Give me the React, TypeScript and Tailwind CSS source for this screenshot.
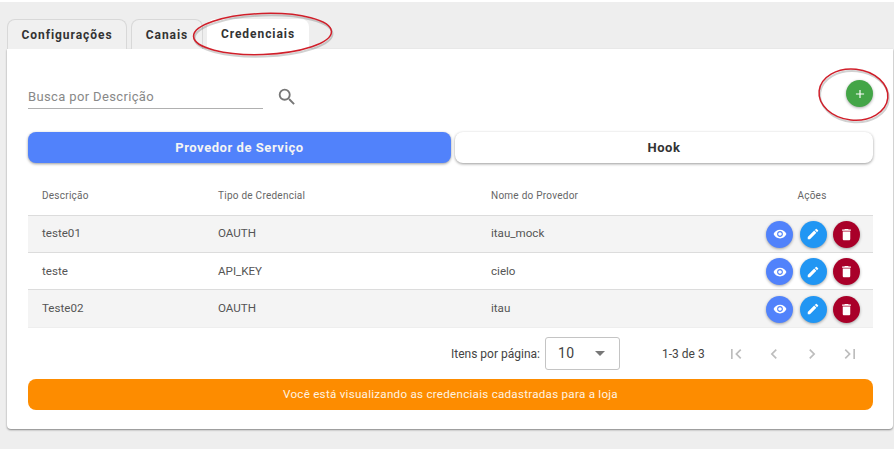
import React from "react";
import {
  MdAdd,
  MdChevronLeft,
  MdChevronRight,
  MdDelete,
  MdEdit,
  MdFirstPage,
  MdLastPage,
  MdSearch,
  MdVisibility,
} from "react-icons/md";

const rows = [
  { descricao: "teste01", tipo: "OAUTH", provedor: "itau_mock" },
  { descricao: "teste", tipo: "API_KEY", provedor: "cielo" },
  { descricao: "Teste02", tipo: "OAUTH", provedor: "itau" },
];

const RoundButton = ({ color, children }: { color: string; children: React.ReactNode }) => (
  <button className={`flex h-[27px] w-[27px] items-center justify-center rounded-full text-white shadow-[0_1px_3px_rgba(0,0,0,0.35)] ${color}`}>
    {children}
  </button>
);

const Tab = ({ label, width, active }: { label: string; width: string; active?: boolean }) => (
  <div
    className={`flex h-[30px] items-center justify-center rounded-t-lg text-[12px] font-bold tracking-[0.95px] text-[#333] ${width} ${
      active ? "bg-white" : "border border-b-0 border-[#d8d8d8] bg-[#f0f0f0]"
    }`}
  >
    {label}
  </div>
);

const App = () => {
  return (
    <div className="relative h-[456px] w-[894px] overflow-hidden bg-white pt-[2px] font-['Roboto',sans-serif]">
      <div className="h-[447px] bg-[#eeeeee] pl-[7px] pr-[1px] pt-[17px]">
        <div className="flex gap-[4px]">
          <Tab label="Configurações" width="w-[120px]" />
          <Tab label="Canais" width="w-[72px]" />
          <Tab label="Credenciais" width="w-[102px]" active />
        </div>
        <div className="h-[380px] rounded-b-sm bg-white pl-[21px] pr-[20px] shadow-[0_1px_2px_rgba(0,0,0,0.45)]">
          <div className="flex h-[83px] items-start justify-between pt-[31px]">
            <div className="mt-[4px] flex items-center">
              <div className="flex h-[25px] w-[235px] items-center whitespace-nowrap border-b border-[#b0b0b0] pt-[2px] text-[13px] tracking-[0.36px] text-[#888]">
                Busca por Descrição
              </div>
              <MdSearch size={22} className="ml-[13px] text-[#777]" />
            </div>
            <button className="flex h-[27px] w-[27px] items-center justify-center rounded-full bg-[#43a547] text-white shadow-[0_1px_3px_rgba(0,0,0,0.35)]">
              <MdAdd size={14} />
            </button>
          </div>

          <div className="flex gap-[4px]">
            <div className="flex h-[31px] w-[423px] items-center justify-center rounded-lg bg-[#5182fb] text-[13px] font-bold tracking-[0.55px] text-[#f4f4f4] shadow-[0_1px_3px_rgba(0,0,0,0.4)]">
              Provedor de Serviço
            </div>
            <div className="flex h-[31px] flex-1 items-center justify-center rounded-lg bg-white text-[13px] font-bold tracking-[0.6px] text-[#333] shadow-[0_1px_3px_rgba(0,0,0,0.4)]">
              Hook
            </div>
          </div>

          <div className="mt-[9px] grid h-[43px] grid-cols-[176px_273px_1fr_100px] items-center pl-[14px] pt-[4px] text-[10px] tracking-[0.25px] text-[#666]">
            <span>Descrição</span>
            <span>Tipo de Credencial</span>
            <span>Nome do Provedor</span>
            <span className="pr-[22px] text-center">Ações</span>
          </div>

          {rows.map((row, i) => (
            <div
              key={row.descricao}
              className={`grid grid-cols-[176px_273px_1fr_auto] items-center border-t border-[#dcdcdc] pl-[14px] text-[11.6px] text-[#555] ${
                i % 2 === 0 ? "bg-[#f4f4f4]" : "bg-white"
              } ${i === 2 ? "h-[38px]" : "h-[37px]"} ${i > 0 ? "pt-[1px]" : ""}`}
            >
              <span>{row.descricao}</span>
              <span>{row.tipo}</span>
              <span>{row.provedor}</span>
              <div className="flex gap-[6.5px] pr-[13px]">
                <RoundButton color="bg-[#5182fb]">
                  <MdVisibility size={14} />
                </RoundButton>
                <RoundButton color="bg-[#2196f3]">
                  <MdEdit size={14} />
                </RoundButton>
                <RoundButton color="bg-[#a90029]">
                  <MdDelete size={15} />
                </RoundButton>
              </div>
            </div>
          ))}

          <div className="flex h-[52px] items-center border-t border-[#eeeeee] pl-[423px] text-[12px] text-[#444]">
            <span className="w-[94px] whitespace-nowrap">Itens por página:</span>
            <div className="flex h-[33px] w-[75px] items-center justify-between rounded-[3px] border border-[#c4c4c4] pl-[12px] pr-[14px] text-[14px] tracking-[0.3px]">
              10
              <span className="h-0 w-0 border-x-[5px] border-t-[5px] border-x-transparent border-t-[#777]" />
            </div>
            <span className="ml-[42px] w-[42px] whitespace-nowrap">1-3 de 3</span>
            <div className="ml-[13px] flex text-[#bdbdbd]">
              <span className="flex w-[38px] justify-center">
                <MdFirstPage size={20} />
              </span>
              <span className="flex w-[38px] justify-center">
                <MdChevronLeft size={20} />
              </span>
              <span className="flex w-[38px] justify-center">
                <MdChevronRight size={20} />
              </span>
              <span className="flex w-[38px] justify-center">
                <MdLastPage size={20} />
              </span>
            </div>
          </div>

          <div className="flex h-[31px] items-center justify-center rounded-lg bg-[#fd8c00] text-[11.6px] tracking-[0.27px] text-[#fff3e0]">
            Você está visualizando as credenciais cadastradas para a loja
          </div>
        </div>
      </div>

      {/* anotações em vermelho por cima da imagem */}
      <svg className="pointer-events-none absolute left-0 top-0" width="894" height="456" fill="none">
        <g stroke="rgba(0,0,0,0.18)" strokeWidth="2" transform="translate(1 2)">
          <ellipse cx="262.5" cy="34" rx="69" ry="20.5" transform="rotate(-2 262 34)" />
          <ellipse cx="853.5" cy="94.5" rx="34.5" ry="25.5" transform="rotate(6 853 94)" />
        </g>
        <g stroke="#d01f2a" strokeWidth="1.5">
          <ellipse cx="262.5" cy="34" rx="69" ry="20.5" transform="rotate(-2 262 34)" />
          <ellipse cx="853.5" cy="94.5" rx="34.5" ry="25.5" transform="rotate(6 853 94)" />
        </g>
      </svg>
    </div>
  );
};

export default App;
